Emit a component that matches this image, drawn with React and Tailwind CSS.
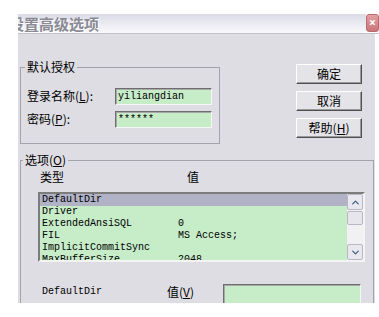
import { ChevronUp, ChevronDown } from 'lucide-react'

const cjk = "font-['SimSun','Noto_Sans_CJK_SC',sans-serif]"
const mono = "font-['Liberation_Mono','DejaVu_Sans_Mono',monospace]"

const rows = [
  { name: 'DefaultDir', value: '', selected: true },
  { name: 'Driver', value: '' },
  { name: 'ExtendedAnsiSQL', value: '0' },
  { name: 'FIL', value: 'MS Access;' },
  { name: 'ImplicitCommitSync', value: '' },
  { name: 'MaxBufferSize', value: '2048' },
]

function Btn({ children }) {
  return (
    <button className={`${cjk} w-[66px] h-[20px] bg-[#e4e3e8] border border-t-white border-l-white border-b-[#505050] border-r-[#505050] shadow-[inset_-1px_-1px_0_#9a9a9a] text-[12px] leading-none text-black flex items-center justify-center`}>
      {children}
    </button>
  )
}

function Field({ value, className = '' }) {
  return (
    <div className={`${mono} bg-[#c6ecc8] border border-[#6e6e6e] border-b-[#f6f6f6] border-r-[#f6f6f6] shadow-[inset_1px_1px_0_#a8a8a8] text-[10px] text-black pl-[2px] flex items-center ${className}`}>
      {value}
    </div>
  )
}

export default function App() {
  return (
    <div className="w-[379px] h-[317px] bg-white overflow-hidden pl-[18px] pt-[14px]">
      {/* title bar */}
      <div className="flex w-[361px] h-[20px] border-b border-[#c2c2ca]">
        <div className="flex-1 overflow-hidden bg-gradient-to-b from-[#dcdce7] to-[#f9f9fc] flex items-center">
          <span className={`${cjk} ml-[-9px] text-[15px] font-bold leading-none text-[#8a8a95] [text-shadow:1px_1px_0_#ffffff] whitespace-nowrap`}>
            设置高级选项
          </span>
        </div>
        <div className="w-[13px] h-[18px] rounded-[3px] bg-gradient-to-b from-[#e2a0a2] to-[#c9767a] border border-[#b86a6e] flex items-center pl-[2px] text-white text-[12px] font-bold leading-none">
          ×
        </div>
      </div>

      {/* body */}
      <div className={`${cjk} w-[357px] h-[269px] overflow-hidden bg-[#dedde3] pl-[2px] text-[12px] text-black`}>
        <div className="flex items-start pt-[26px]">
          <fieldset className="w-[200px] border border-[#a2a2aa] pb-[15px]">
            <legend className="ml-[4px] px-[2px] leading-[14px]">默认授权</legend>
            <div className="pt-[13px] pl-[6px] flex flex-col gap-[5px]">
              <div className="flex items-center">
                <span className="w-[88px]">登录名称(<span className="underline">L</span>):</span>
                <Field value="yiliangdian" className="w-[97px] h-[17px]" />
              </div>
              <div className="flex items-center">
                <span className="w-[88px]">密码(<span className="underline">P</span>):</span>
                <Field value="******" className="w-[97px] h-[17px]" />
              </div>
            </div>
          </fieldset>
          <div className="ml-[76px] mt-[4px] flex flex-col gap-[7px]">
            <Btn>确定</Btn>
            <Btn>取消</Btn>
            <Btn>帮助(<span className="underline">H</span>)</Btn>
          </div>
        </div>

        <fieldset className="mt-[9px] w-[354px] border border-[#a2a2aa] pb-[20px]">
          <legend className="ml-[2px] px-[2px] leading-[14px]">选项(<span className="underline">O</span>)</legend>
          <div className="mt-[3px] flex leading-[14px]">
            <span className="ml-[19px] w-[147px]">类型</span>
            <span>值</span>
          </div>

          {/* list */}
          <div className="ml-[17px] mt-[8px] w-[327px] h-[70px] border-2 border-t-[#7c7c7c] border-l-[#7c7c7c] border-b-[#f4f4f4] border-r-[#f4f4f4] bg-[#c6ecc8] flex">
            <div className={`${mono} flex-1 overflow-hidden text-[10px] leading-[12px]`}>
              {rows.map((r) => (
                <div key={r.name} className={`grid grid-cols-[136px_1fr] h-[12px] pl-[2px] ${r.selected ? 'bg-[#b2b2c6]' : ''}`}>
                  <span>{r.name}</span>
                  <span>{r.value}</span>
                </div>
              ))}
            </div>
            <div className="w-[16px] bg-[#f1f1f3] flex flex-col">
              <div className="h-[16px] bg-[#e8e8ee] border border-[#b8b8c4] rounded-[2px] flex items-center justify-center">
                <ChevronUp size={11} strokeWidth={3} className="text-[#4d6185]" />
              </div>
              <div className="mt-[1px] h-[14px] bg-[#e6e6ec] border border-[#b8b8c4] rounded-[2px]" />
              <div className="flex-1" />
              <div className="h-[16px] bg-[#e8e8ee] border border-[#b8b8c4] rounded-[2px] flex items-center justify-center">
                <ChevronDown size={11} strokeWidth={3} className="text-[#4d6185]" />
              </div>
            </div>
          </div>

          <div className="mt-[22px] flex items-start">
            <span className={`${mono} ml-[21px] mt-[1px] w-[125px] text-[10px] leading-[14px]`}>DefaultDir</span>
            <span className="w-[56px] mt-[1px] leading-[14px]">值(<span className="underline">V</span>)</span>
            <Field value="" className="w-[138px] h-[22px]" />
          </div>
        </fieldset>
      </div>
    </div>
  )
}
